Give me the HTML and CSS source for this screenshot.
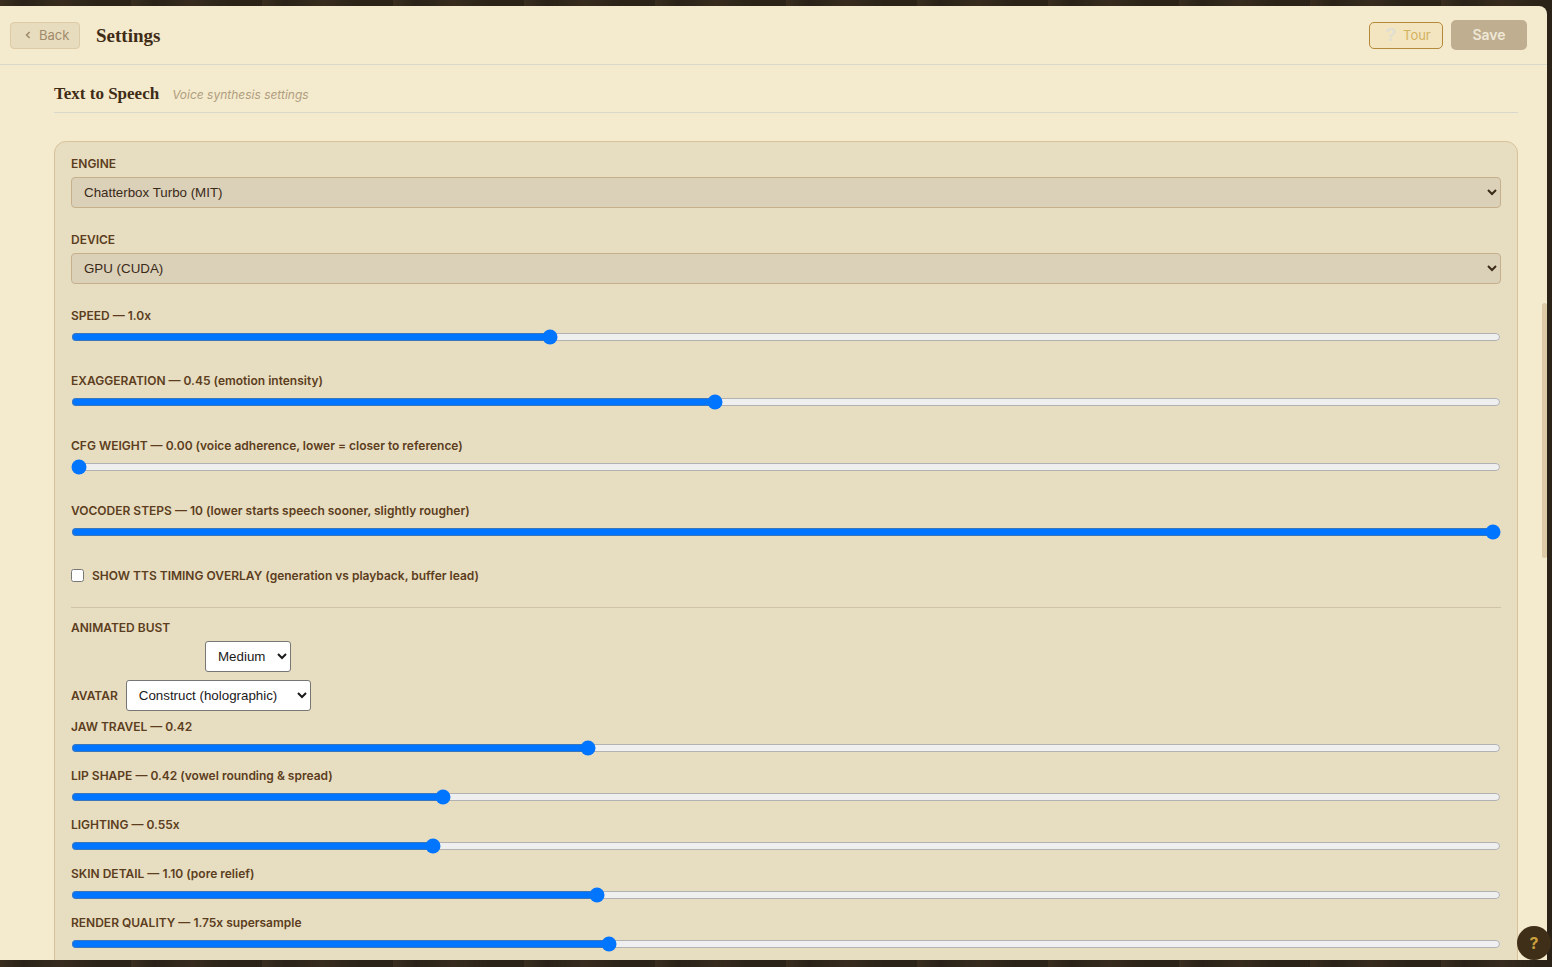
FILE: index.html
```html
<!DOCTYPE html>
<html lang="en">
<head>
    <meta charset="UTF-8">
    <meta name="viewport" content="width=device-width, initial-scale=1.0">
    <title>Settings</title>
    <link rel="stylesheet" href="styles.css">
</head>
<body>
    <div class="panel">
        <header class="topbar">
            <button class="back-btn">
                <svg class="chev" width="6" height="8" viewBox="0 0 6 8"><path d="M4.6 1 1.6 4l3 3" fill="none" stroke="currentColor" stroke-width="1.6"/></svg>
                Back
            </button>
            <h1>Settings</h1>
            <div class="topbar-actions">
                <button class="tour-btn"><span class="tour-q">?</span>Tour</button>
                <button class="save-btn">Save</button>
            </div>
        </header>
        <div class="scrollthumb"></div>
        <main class="content">
            <div class="section-head">
                <h2>Text to Speech</h2>
                <span class="section-sub">Voice synthesis settings</span>
            </div>
            <section class="card">
                <div class="group">
                    <label>ENGINE</label>
                    <select class="wide-select"><option>Chatterbox Turbo (MIT)</option></select>
                </div>
                <div class="group">
                    <label>DEVICE</label>
                    <select class="wide-select"><option>GPU (CUDA)</option></select>
                </div>
                <div class="group group-range">
                    <label>SPEED — 1.0x</label>
                    <input type="range" min="0" max="100" step="any" value="33.33">
                </div>
                <div class="group group-range">
                    <label>EXAGGERATION — 0.45 (emotion intensity)</label>
                    <input type="range" min="0" max="100" step="any" value="45">
                </div>
                <div class="group group-range">
                    <label>CFG WEIGHT — 0.00 (voice adherence, lower = closer to reference)</label>
                    <input type="range" min="0" max="100" step="any" value="0">
                </div>
                <div class="group group-range">
                    <label>VOCODER STEPS — 10 (lower starts speech sooner, slightly rougher)</label>
                    <input type="range" min="0" max="100" step="any" value="100">
                </div>
                <label class="check-row"><input type="checkbox"> SHOW TTS TIMING OVERLAY (generation vs playback, buffer lead)</label>
                <hr class="divider">
                <div class="bust">
                    <label>ANIMATED BUST</label>
                    <div class="quality-row"><select class="plain-select"><option>Medium</option></select></div>
                    <div class="avatar-row">
                        <label>AVATAR</label>
                        <select class="plain-select avatar-select"><option>Construct (holographic)</option></select>
                    </div>
                    <div class="slim">
                        <label>JAW TRAVEL — 0.42</label>
                        <input type="range" min="0" max="100" step="any" value="36">
                    </div>
                    <div class="slim">
                        <label>LIP SHAPE — 0.42 (vowel rounding &amp; spread)</label>
                        <input type="range" min="0" max="100" step="any" value="25.74">
                    </div>
                    <div class="slim">
                        <label>LIGHTING — 0.55x</label>
                        <input type="range" min="0" max="100" step="any" value="25.03">
                    </div>
                    <div class="slim">
                        <label>SKIN DETAIL — 1.10 (pore relief)</label>
                        <input type="range" min="0" max="100" step="any" value="36.63">
                    </div>
                    <div class="slim">
                        <label>RENDER QUALITY — 1.75x supersample</label>
                        <input type="range" min="0" max="100" step="any" value="37.48">
                    </div>
                </div>
            </section>
        </main>
    </div>
    <button class="help-fab">?</button>
</body>
</html>
```

FILE: styles.css
```css
html, body {
    height: 100%;
    margin: 0;
    overflow: hidden;
}
body {
    background-color: #30271b;
    /* rough stand-in for the dark wood texture behind the panel */
    background-image:
        linear-gradient(90deg, rgba(96, 76, 50, 0.18), rgba(0, 0, 0, 0.12) 23px, rgba(80, 62, 40, 0.2) 61px, rgba(0, 0, 0, 0.1) 97px);
    background-size: 131px 100%;
    font-family: Inter, sans-serif;
    color: #5c3d20;
    padding: 6px 5px 7px 0;
    box-sizing: border-box;
}
.panel {
    position: relative;
    height: 100%;
    background: #f4eacd;
    border-top-right-radius: 8px;
    overflow: hidden;
}
.topbar {
    display: flex;
    align-items: center;
    height: 58px;
    padding: 0 20px 0 10px;
    border-bottom: 1px solid #d9d8cc;
}
.topbar h1 {
    margin: 2px 0 0 16px;
    font-family: "Liberation Serif", serif;
    font-size: 19px;
    font-weight: 700;
    color: #3f2c17;
}
.back-btn {
    display: flex;
    align-items: center;
    width: 70px;
    height: 27px;
    padding: 0 0 0 14px;
    background: #e8dcbe;
    border: 1px solid #dccba6;
    border-radius: 4px;
    color: #9f8b6c;
    font-family: Inter, sans-serif;
    font-size: 13px;
}
.chev {
    margin-right: 8px;
}
.topbar-actions {
    display: flex;
    align-items: center;
    gap: 8px;
    margin-left: auto;
}
.tour-btn {
    display: flex;
    align-items: center;
    width: 74px;
    height: 27px;
    padding: 0 0 0 15px;
    background: #f2e5c0;
    border: 1px solid #b5893a;
    border-radius: 5px;
    color: #d4b25e;
    font-family: Inter, sans-serif;
    font-size: 13px;
}
.tour-q {
    width: 18px;
    color: #e2dfd2;
    font-family: "Liberation Sans", sans-serif;
    font-size: 19px;
    font-weight: 700;
    text-align: left;
}
.save-btn {
    width: 76px;
    height: 30px;
    padding: 0 0 2px;
    background: #bfae90;
    border: none;
    border-radius: 5px;
    color: #efe8d6;
    font-family: Inter, sans-serif;
    font-size: 14px;
    font-weight: 600;
}
.scrollthumb {
    position: absolute;
    top: 297px;
    right: 0;
    width: 5px;
    height: 255px;
    background: #dccba6;
    border-radius: 3px;
}
.content {
    padding: 0 29px 0 54px;
}
.section-head {
    display: flex;
    align-items: baseline;
    gap: 13px;
    height: 48px;
    box-sizing: border-box;
    padding-top: 19px;
    border-bottom: 1px solid #d9d8cc;
}
.section-head h2 {
    margin: 0;
    font-family: "Liberation Serif", serif;
    font-size: 17px;
    font-weight: 700;
    color: #3f2c17;
}
.section-sub {
    font-size: 12px;
    font-style: italic;
    color: #b09e80;
}
.card {
    margin-top: 28px;
    padding: 14px 16px;
    background: #e7ddc1;
    border: 1px solid #d6c29c;
    border-radius: 12px;
}
label {
    display: block;
    font-size: 12px;
    font-weight: 600;
    line-height: 15px;
    color: #5c3d20;
}
.group {
    margin-bottom: 24px;
}
.group-range {
    margin-bottom: 28px;
}
.group label {
    margin-bottom: 6px;
}
.wide-select {
    display: block;
    width: 100%;
    height: 31px;
    padding: 0 8px;
    background: #dbd0b8;
    border: 1px solid #c6b08c;
    border-radius: 4px;
    color: #3a2a18;
    font-family: "Liberation Sans", sans-serif;
    font-size: 13.33px;
}
input[type="range"] {
    display: block;
    width: 100%;
    height: 16px;
    margin: 0;
}
.check-row {
    display: flex;
    align-items: center;
    gap: 8px;
}
.check-row input {
    width: 13px;
    height: 13px;
    margin: 0;
}
.divider {
    margin: 24px 0 12px;
    border: none;
    border-top: 1px solid #cfc2a6;
}
.quality-row {
    margin: 6px 0 8px 134px;
}
.plain-select {
    height: 31px;
    padding: 0 8px;
    background: #fff;
    border: 1px solid #767676;
    border-radius: 3px;
    color: #1a1a1a;
    font-family: "Liberation Sans", sans-serif;
    font-size: 13.33px;
}
.avatar-select {
    width: 185px;
}
.avatar-row {
    display: flex;
    align-items: center;
    gap: 8px;
    margin-bottom: 8px;
}
.slim {
    margin-bottom: 12px;
}
.slim label {
    margin-bottom: 6px;
}
.help-fab {
    position: fixed;
    right: 1px;
    bottom: 7px;
    width: 34px;
    height: 34px;
    padding: 0;
    background: #3f2e18;
    border: none;
    border-radius: 50%;
    color: #c9a03c;
    font-family: Inter, sans-serif;
    font-size: 16px;
    font-weight: 700;
}
```
